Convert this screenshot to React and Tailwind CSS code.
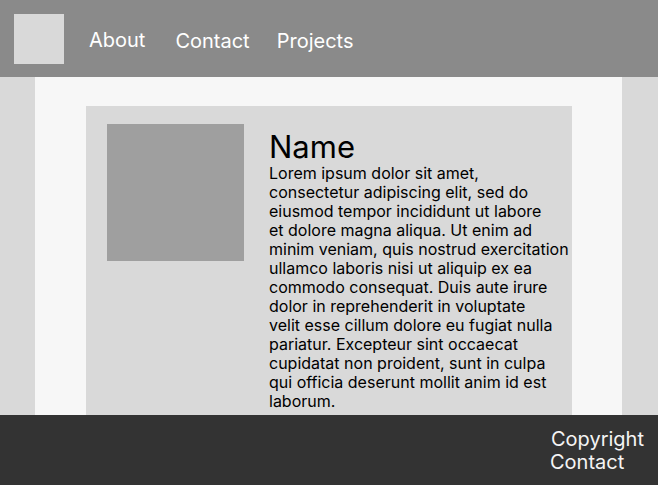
const lines = [
  "Lorem ipsum dolor sit amet,",
  "consectetur adipiscing elit, sed do",
  "eiusmod tempor incididunt ut labore",
  "et dolore magna aliqua. Ut enim ad",
  "minim veniam, quis nostrud exercitation",
  "ullamco laboris nisi ut aliquip ex ea",
  "commodo consequat. Duis aute irure",
  "dolor in reprehenderit in voluptate",
  "velit esse cillum dolore eu fugiat nulla",
  "pariatur. Excepteur sint occaecat",
  "cupidatat non proident, sunt in culpa",
  "qui officia deserunt mollit anim id est",
  "laborum.",
]

export default function App() {
  return (
    <div className="min-h-screen bg-[#d9d9d9] font-['Inter',sans-serif]">
      <header className="h-[77px] bg-[#8a8a8a] flex items-start pt-[14px] pl-[14px] text-white text-[20px]">
        <div className="w-[50px] h-[50px] bg-[#d9d9d9]" />
        <a className="ml-[25px] mt-[14px] leading-[24px]">About</a>
        <a className="ml-[30px] mt-[15px] leading-[24px]">Contact</a>
        <a className="ml-[27px] mt-[15px] leading-[24px]">Projects</a>
      </header>
      <main className="mx-[35px] w-[587px] bg-[#f7f7f7] pt-[29px] pl-[51px] pb-[80px]">
        <div className="w-[486px] bg-[#d9d9d9] flex pt-[18px] pl-[21px] pb-[20px]">
          <div className="w-[137px] h-[137px] shrink-0 bg-[#9f9f9f]" />
          <div className="ml-[25px] w-[303px] text-black">
            <h1 className="text-[31px] leading-[39px] mt-[3px]">Name</h1>
            <p className="text-[16px] leading-[19px] -mt-[2px] whitespace-nowrap">
              {lines.map((l, i) => (
                <span key={i} className="block">{l}</span>
              ))}
            </p>
          </div>
        </div>
      </main>
      <footer className="fixed bottom-0 left-0 right-0 h-[70px] bg-[#333333] flex justify-end pr-[14px] pt-[13px] text-[#f5f5f5] text-[20px] leading-[23px]">
        <div className="flex flex-col">
          <span className="ml-[1px]">Copyright</span>
          <span>Contact</span>
        </div>
      </footer>
    </div>
  )
}
